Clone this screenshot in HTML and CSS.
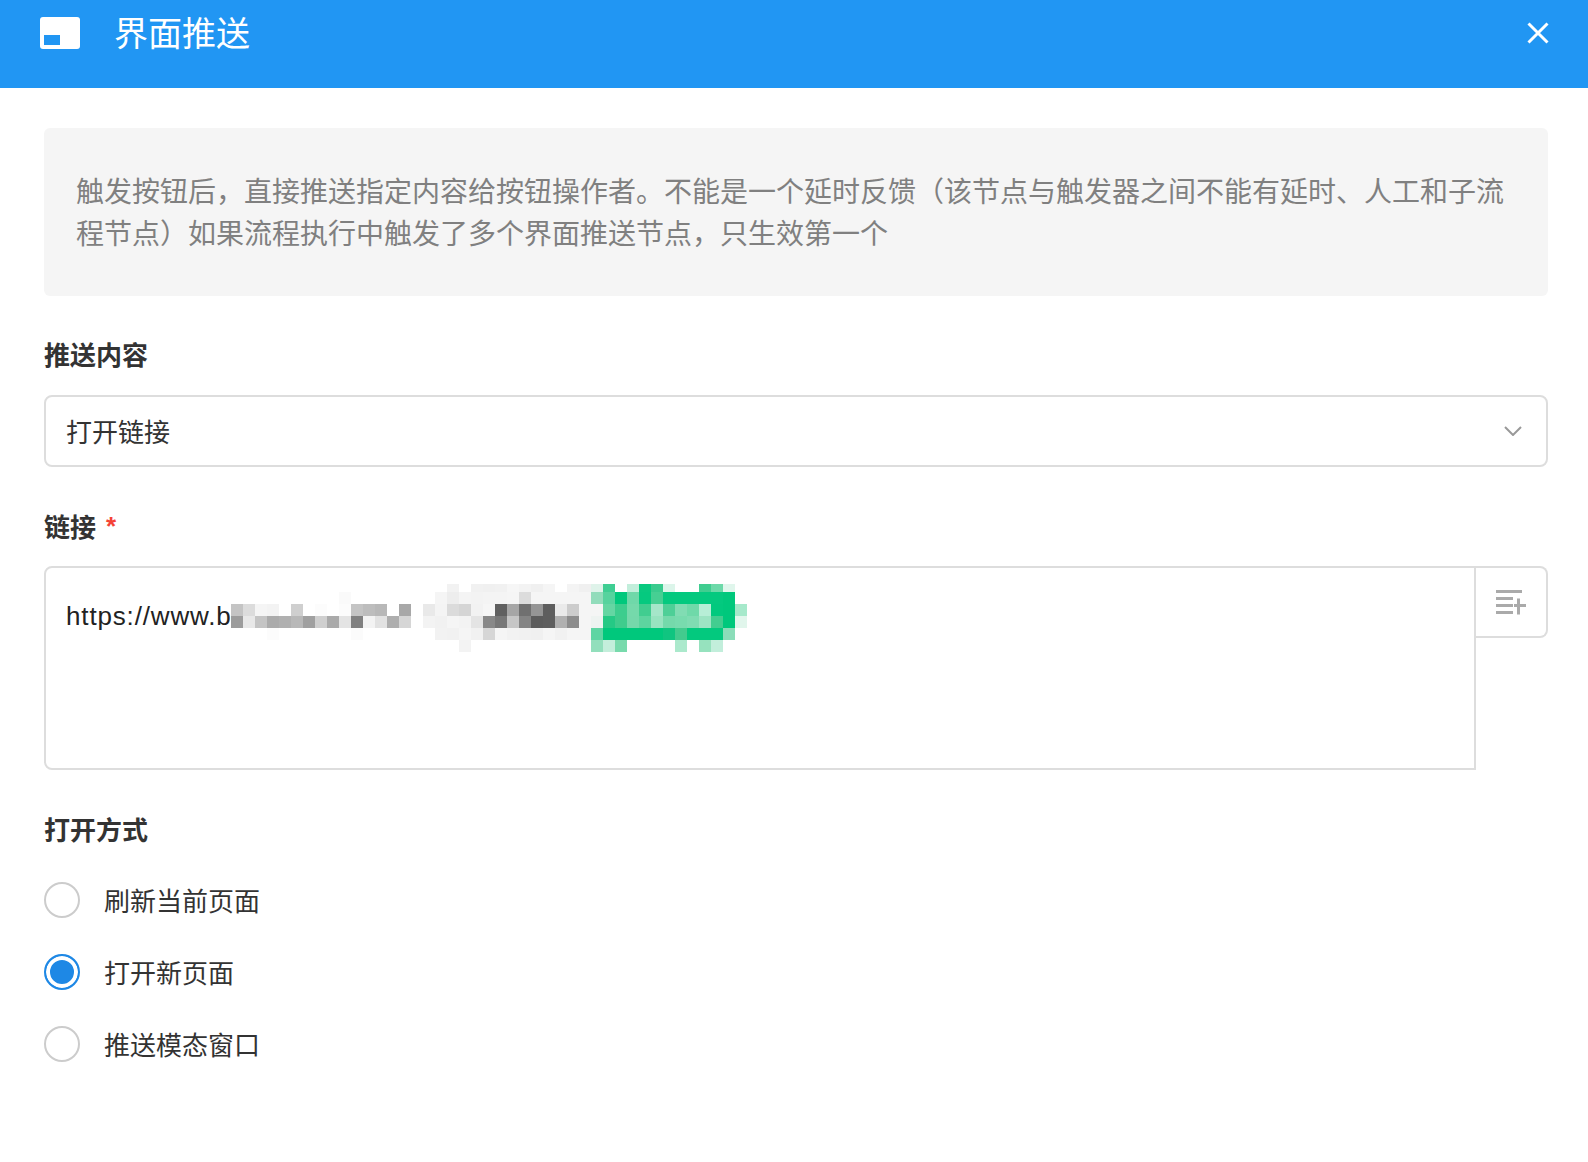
FILE: index.html
```html
<!DOCTYPE html>
<html lang="zh-CN">
<head>
<meta charset="utf-8">
<title>界面推送</title>
<link rel="stylesheet" href="styles.css">
</head>
<body>
<header class="header">
  <svg class="header-icon" width="40" height="32" viewBox="0 0 40 32"><rect width="40" height="32" rx="3" fill="#fff"/><rect x="4" y="18" width="16" height="10" fill="#2196f3"/></svg>
  <h1 class="title">界面推送</h1>
  <svg class="close" width="22" height="22" viewBox="0 0 22 22"><path d="M1.5 1.5l19 19M20.5 1.5l-19 19" stroke="#fff" stroke-width="3" fill="none"/></svg>
</header>
<main class="main">
  <p class="desc">触发按钮后，直接推送指定内容给按钮操作者。不能是一个延时反馈（该节点与触发器之间不能有延时、人工和子流程节点）如果流程执行中触发了多个界面推送节点，只生效第一个</p>
  <div class="label label-first">推送内容</div>
  <div class="select">
    <span class="select-text">打开链接</span>
    <svg width="18" height="10" viewBox="0 0 18 10"><path d="M1 1l8 8 8-8" stroke="#999" stroke-width="2" fill="none"/></svg>
  </div>
  <div class="label label-link">链接<span class="req">*</span></div>
  <div class="link-row">
    <div class="textarea">
      <span class="url">https://www.ba</span>
      <svg class="mosaic" width="516" height="68" viewBox="0 0 516 68" shape-rendering="crispEdges">
        <g class="top">
          <rect x="216" y="0" fill="#f2f2f2"/><rect x="240" y="0" fill="#f1f1f1"/><rect x="252" y="0" fill="#f0f0f0"/><rect x="264" y="0" fill="#f1f1f1"/><rect x="276" y="0" fill="#f6f6f6"/><rect x="288" y="0" fill="#f3f3f3"/><rect x="300" y="0" fill="#f0f0f0"/><rect x="312" y="0" fill="#f5f5f5"/><rect x="336" y="0" fill="#f4f4f4"/><rect x="348" y="0" fill="#f0f0f0"/><rect x="360" y="0" fill="#dff3ea"/><rect x="372" y="0" fill="#3fce93"/><rect x="396" y="0" fill="#c2eedb"/><rect x="408" y="0" fill="#08c97f"/><rect x="420" y="0" fill="#3acb8e"/><rect x="432" y="0" fill="#dcf5ea"/><rect x="468" y="0" fill="#40cd90"/><rect x="480" y="0" fill="#6dd9a9"/><rect x="492" y="0" fill="#e0f6ec"/>
        </g>
        <g class="cell">
          <rect x="108" y="8" fill="#fafafa"/><rect x="204" y="8" fill="#f5f5f5"/><rect x="216" y="8" fill="#ededed"/><rect x="228" y="8" fill="#f4f4f4"/><rect x="240" y="8" fill="#f3f3f3"/><rect x="252" y="8" fill="#f4f4f4"/><rect x="264" y="8" fill="#f4f4f4"/><rect x="276" y="8" fill="#f5f5f5"/><rect x="288" y="8" fill="#dcdcdc"/><rect x="300" y="8" fill="#f5f5f5"/><rect x="312" y="8" fill="#f5f5f5"/><rect x="324" y="8" fill="#f5f5f5"/><rect x="336" y="8" fill="#f5f5f5"/><rect x="348" y="8" fill="#f5f5f5"/><rect x="360" y="8" fill="#92dcbb"/><rect x="372" y="8" fill="#56d39e"/><rect x="384" y="8" fill="#00c87c"/><rect x="396" y="8" fill="#6fd8a9"/><rect x="408" y="8" fill="#05c97f"/><rect x="420" y="8" fill="#46cf93"/><rect x="432" y="8" fill="#04c97f"/><rect x="444" y="8" fill="#04c97f"/><rect x="456" y="8" fill="#04c97f"/><rect x="468" y="8" fill="#04c97f"/><rect x="480" y="8" fill="#04c97f"/><rect x="492" y="8" fill="#00c87c"/>

          <rect x="0" y="20" fill="#c4c4c4"/><rect x="12" y="20" fill="#dcdcdc"/><rect x="24" y="20" fill="#f5f5f5"/><rect x="36" y="20" fill="#f3f3f3"/><rect x="60" y="20" fill="#cfcfcf"/><rect x="84" y="20" fill="#fcfcfc"/><rect x="108" y="20" fill="#fcfcfc"/><rect x="120" y="20" fill="#c4c4c4"/><rect x="132" y="20" fill="#bdbdbd"/><rect x="144" y="20" fill="#b8b8b8"/><rect x="168" y="20" fill="#a8a8a8"/><rect x="192" y="20" fill="#e9e9e9"/><rect x="204" y="20" fill="#f4f4f4"/><rect x="216" y="20" fill="#dbdbdb"/><rect x="228" y="20" fill="#d5d5d5"/><rect x="240" y="20" fill="#f2f2f2"/><rect x="252" y="20" fill="#f6f6f6"/><rect x="264" y="20" fill="#606060"/><rect x="276" y="20" fill="#a6a6a6"/><rect x="288" y="20" fill="#707070"/><rect x="300" y="20" fill="#959595"/><rect x="312" y="20" fill="#5e5e5e"/><rect x="324" y="20" fill="#eaeaea"/><rect x="336" y="20" fill="#cccccc"/><rect x="348" y="20" fill="#f5f5f5"/><rect x="360" y="20" fill="#f5f5f5"/><rect x="372" y="20" fill="#65d6a3"/><rect x="384" y="20" fill="#3dcd8e"/><rect x="396" y="20" fill="#75d9ab"/><rect x="408" y="20" fill="#41cd90"/><rect x="420" y="20" fill="#a5e6c9"/><rect x="432" y="20" fill="#4ecf97"/><rect x="444" y="20" fill="#81dcb3"/><rect x="456" y="20" fill="#6fd9a9"/><rect x="468" y="20" fill="#b7eed6"/><rect x="480" y="20" fill="#02c97e"/><rect x="492" y="20" fill="#00c87c"/><rect x="504" y="20" fill="#a6e9cb"/>

          <rect x="0" y="32" fill="#9c9c9c"/><rect x="12" y="32" fill="#e8e8e8"/><rect x="24" y="32" fill="#c4c4c4"/><rect x="36" y="32" fill="#ababab"/><rect x="48" y="32" fill="#b0b0b0"/><rect x="60" y="32" fill="#b8b8b8"/><rect x="72" y="32" fill="#a0a0a0"/><rect x="84" y="32" fill="#cfcfcf"/><rect x="96" y="32" fill="#aaaaaa"/><rect x="108" y="32" fill="#e4e4e4"/><rect x="120" y="32" fill="#808080"/><rect x="132" y="32" fill="#f3f3f3"/><rect x="144" y="32" fill="#e2e2e2"/><rect x="156" y="32" fill="#aeaeae"/><rect x="168" y="32" fill="#d6d6d6"/><rect x="192" y="32" fill="#f3f3f3"/><rect x="204" y="32" fill="#f1f1f1"/><rect x="216" y="32" fill="#f5f5f5"/><rect x="228" y="32" fill="#f3f3f3"/><rect x="240" y="32" fill="#e4e4e4"/><rect x="252" y="32" fill="#888888"/><rect x="264" y="32" fill="#777777"/><rect x="276" y="32" fill="#c6c6c6"/><rect x="288" y="32" fill="#848484"/><rect x="300" y="32" fill="#5c5c5c"/><rect x="312" y="32" fill="#5e5e5e"/><rect x="324" y="32" fill="#b0b0b0"/><rect x="336" y="32" fill="#8c8c8c"/><rect x="348" y="32" fill="#f5f5f5"/><rect x="360" y="32" fill="#eef3f1"/><rect x="372" y="32" fill="#25c985"/><rect x="384" y="32" fill="#3fcc8d"/><rect x="396" y="32" fill="#75d8ab"/><rect x="408" y="32" fill="#5dd49f"/><rect x="420" y="32" fill="#98e3c0"/><rect x="432" y="32" fill="#75d9ab"/><rect x="444" y="32" fill="#78dbae"/><rect x="456" y="32" fill="#7fdcb2"/><rect x="468" y="32" fill="#9de4c3"/><rect x="480" y="32" fill="#43cd90"/><rect x="492" y="32" fill="#00c87c"/><rect x="504" y="32" fill="#e1f6ec"/>

          <rect x="36" y="44" fill="#fcfcfc"/><rect x="120" y="44" fill="#fbfbfb"/><rect x="204" y="44" fill="#f2f2f2"/><rect x="216" y="44" fill="#f1f1f1"/><rect x="228" y="44" fill="#f5f5f5"/><rect x="240" y="44" fill="#f1f1f1"/><rect x="252" y="44" fill="#d6d6d6"/><rect x="264" y="44" fill="#f5f5f5"/><rect x="276" y="44" fill="#f2f2f2"/><rect x="288" y="44" fill="#f1f1f1"/><rect x="300" y="44" fill="#f0f0f0"/><rect x="312" y="44" fill="#f5f5f5"/><rect x="324" y="44" fill="#f1f1f1"/><rect x="336" y="44" fill="#f5f5f5"/><rect x="348" y="44" fill="#f5f5f5"/><rect x="360" y="44" fill="#5fd5a3"/><rect x="372" y="44" fill="#00c87c"/><rect x="384" y="44" fill="#00c87c"/><rect x="396" y="44" fill="#00c87c"/><rect x="408" y="44" fill="#00c87c"/><rect x="420" y="44" fill="#00c87c"/><rect x="432" y="44" fill="#10c580"/><rect x="444" y="44" fill="#43cb8e"/><rect x="456" y="44" fill="#03c97e"/><rect x="468" y="44" fill="#03c97e"/><rect x="480" y="44" fill="#03c97e"/><rect x="492" y="44" fill="#8bddb9"/>

          <rect x="228" y="56" fill="#f3f3f3"/><rect x="360" y="56" fill="#92dfbc"/><rect x="372" y="56" fill="#c4eedb"/><rect x="384" y="56" fill="#78daac"/><rect x="444" y="56" fill="#abe9cc"/><rect x="468" y="56" fill="#96e2be"/><rect x="480" y="56" fill="#c2eedb"/>
        </g>
      </svg>
    </div>
    <div class="side-btn">
      <svg width="30" height="26" viewBox="0 0 30 26"><path d="M0 2.5h26M0 9.5h17M0 16.5h17M0 23.5h17" stroke="#aaa" stroke-width="3" fill="none"/><path d="M18 16.5h12M22.5 9.5v16" stroke="#aaa" stroke-width="3" fill="none"/></svg>
    </div>
  </div>
  <div class="label label-open">打开方式</div>
  <div class="radios">
    <div class="radio-row"><span class="radio"></span><span class="radio-text">刷新当前页面</span></div>
    <div class="radio-row"><span class="radio radio-on"></span><span class="radio-text">打开新页面</span></div>
    <div class="radio-row"><span class="radio"></span><span class="radio-text">推送模态窗口</span></div>
  </div>
</main>
</body>
</html>
```
FILE: styles.css
```css
* { box-sizing: border-box; }
html, body { margin: 0; padding: 0; }
body {
  width: 1588px;
  height: 1162px;
  overflow: hidden;
  background: #fff;
  color: #333;
  font-family: "Liberation Sans", "Noto Sans CJK SC", sans-serif;
  font-size: 26px;
}
.header {
  height: 88px;
  background: #2196f3;
  display: flex;
  align-items: flex-start;
  padding: 17px 39px 0 40px;
}
.header-icon { flex: none; }
.title {
  margin: -7px 0 0 34px;
  font-size: 34px;
  line-height: 48px;
  font-weight: 400;
  color: #fff;
  flex: 1;
}
.close { margin-top: 5px; flex: none; }
.main { padding: 40px 40px 0 44px; }
.desc {
  margin: 0;
  height: 168px;
  padding: 44px 32px 40px;
  background: #f5f5f5;
  border-radius: 6px;
  color: #808080;
  font-size: 28px;
  line-height: 42px;
}
.label { height: 36px; font-weight: 700; line-height: 36px; color: #333; }
.label-first { margin: 42px 0 21px; }
.label-link { margin: 43px 0 20px; }
.label-open { margin: 43px 0 33px; }
.req { color: #f44336; margin-left: 10px; font-size: 26px; line-height: 0; vertical-align: 2px; font-family: "Liberation Sans", sans-serif; }
.select {
  height: 72px;
  border: 2px solid #ddd;
  border-radius: 8px;
  display: flex;
  align-items: center;
  justify-content: space-between;
  padding: 0 24px 0 20px;
}
.select-text { padding-bottom: 2px; }
.link-row { display: flex; align-items: flex-start; }
.textarea {
  position: relative;
  width: 1432px;
  height: 204px;
  border: 2px solid #ddd;
  border-radius: 8px 0 0 8px;
  padding: 30px 20px;
  line-height: 36px;
  color: #222;
}
.url { font-size: 26px; letter-spacing: 0.85px; }
.mosaic { position: absolute; left: 185px; top: 16px; }
.mosaic .top rect { width: 12px; height: 8px; }
.mosaic .cell rect { width: 12px; height: 12px; }
.side-btn {
  width: 72px;
  height: 72px;
  border: 2px solid #ddd;
  border-left: 0;
  border-radius: 0 8px 8px 0;
  display: flex;
  align-items: center;
  justify-content: flex-start;
  padding-left: 20px;
}
.radios { display: flex; flex-direction: column; gap: 36px; }
.radio-row { display: flex; align-items: center; height: 36px; gap: 24px; color: #333; }
.radio-text { padding-bottom: 2px; }
.radio {
  width: 36px;
  height: 36px;
  flex: none;
  border: 2px solid #ccc;
  border-radius: 50%;
  background: #fff;
}
.radio-on {
  border-color: #1e88e5;
  background: #1e88e5;
  box-shadow: inset 0 0 0 4px #fff;
}
```
